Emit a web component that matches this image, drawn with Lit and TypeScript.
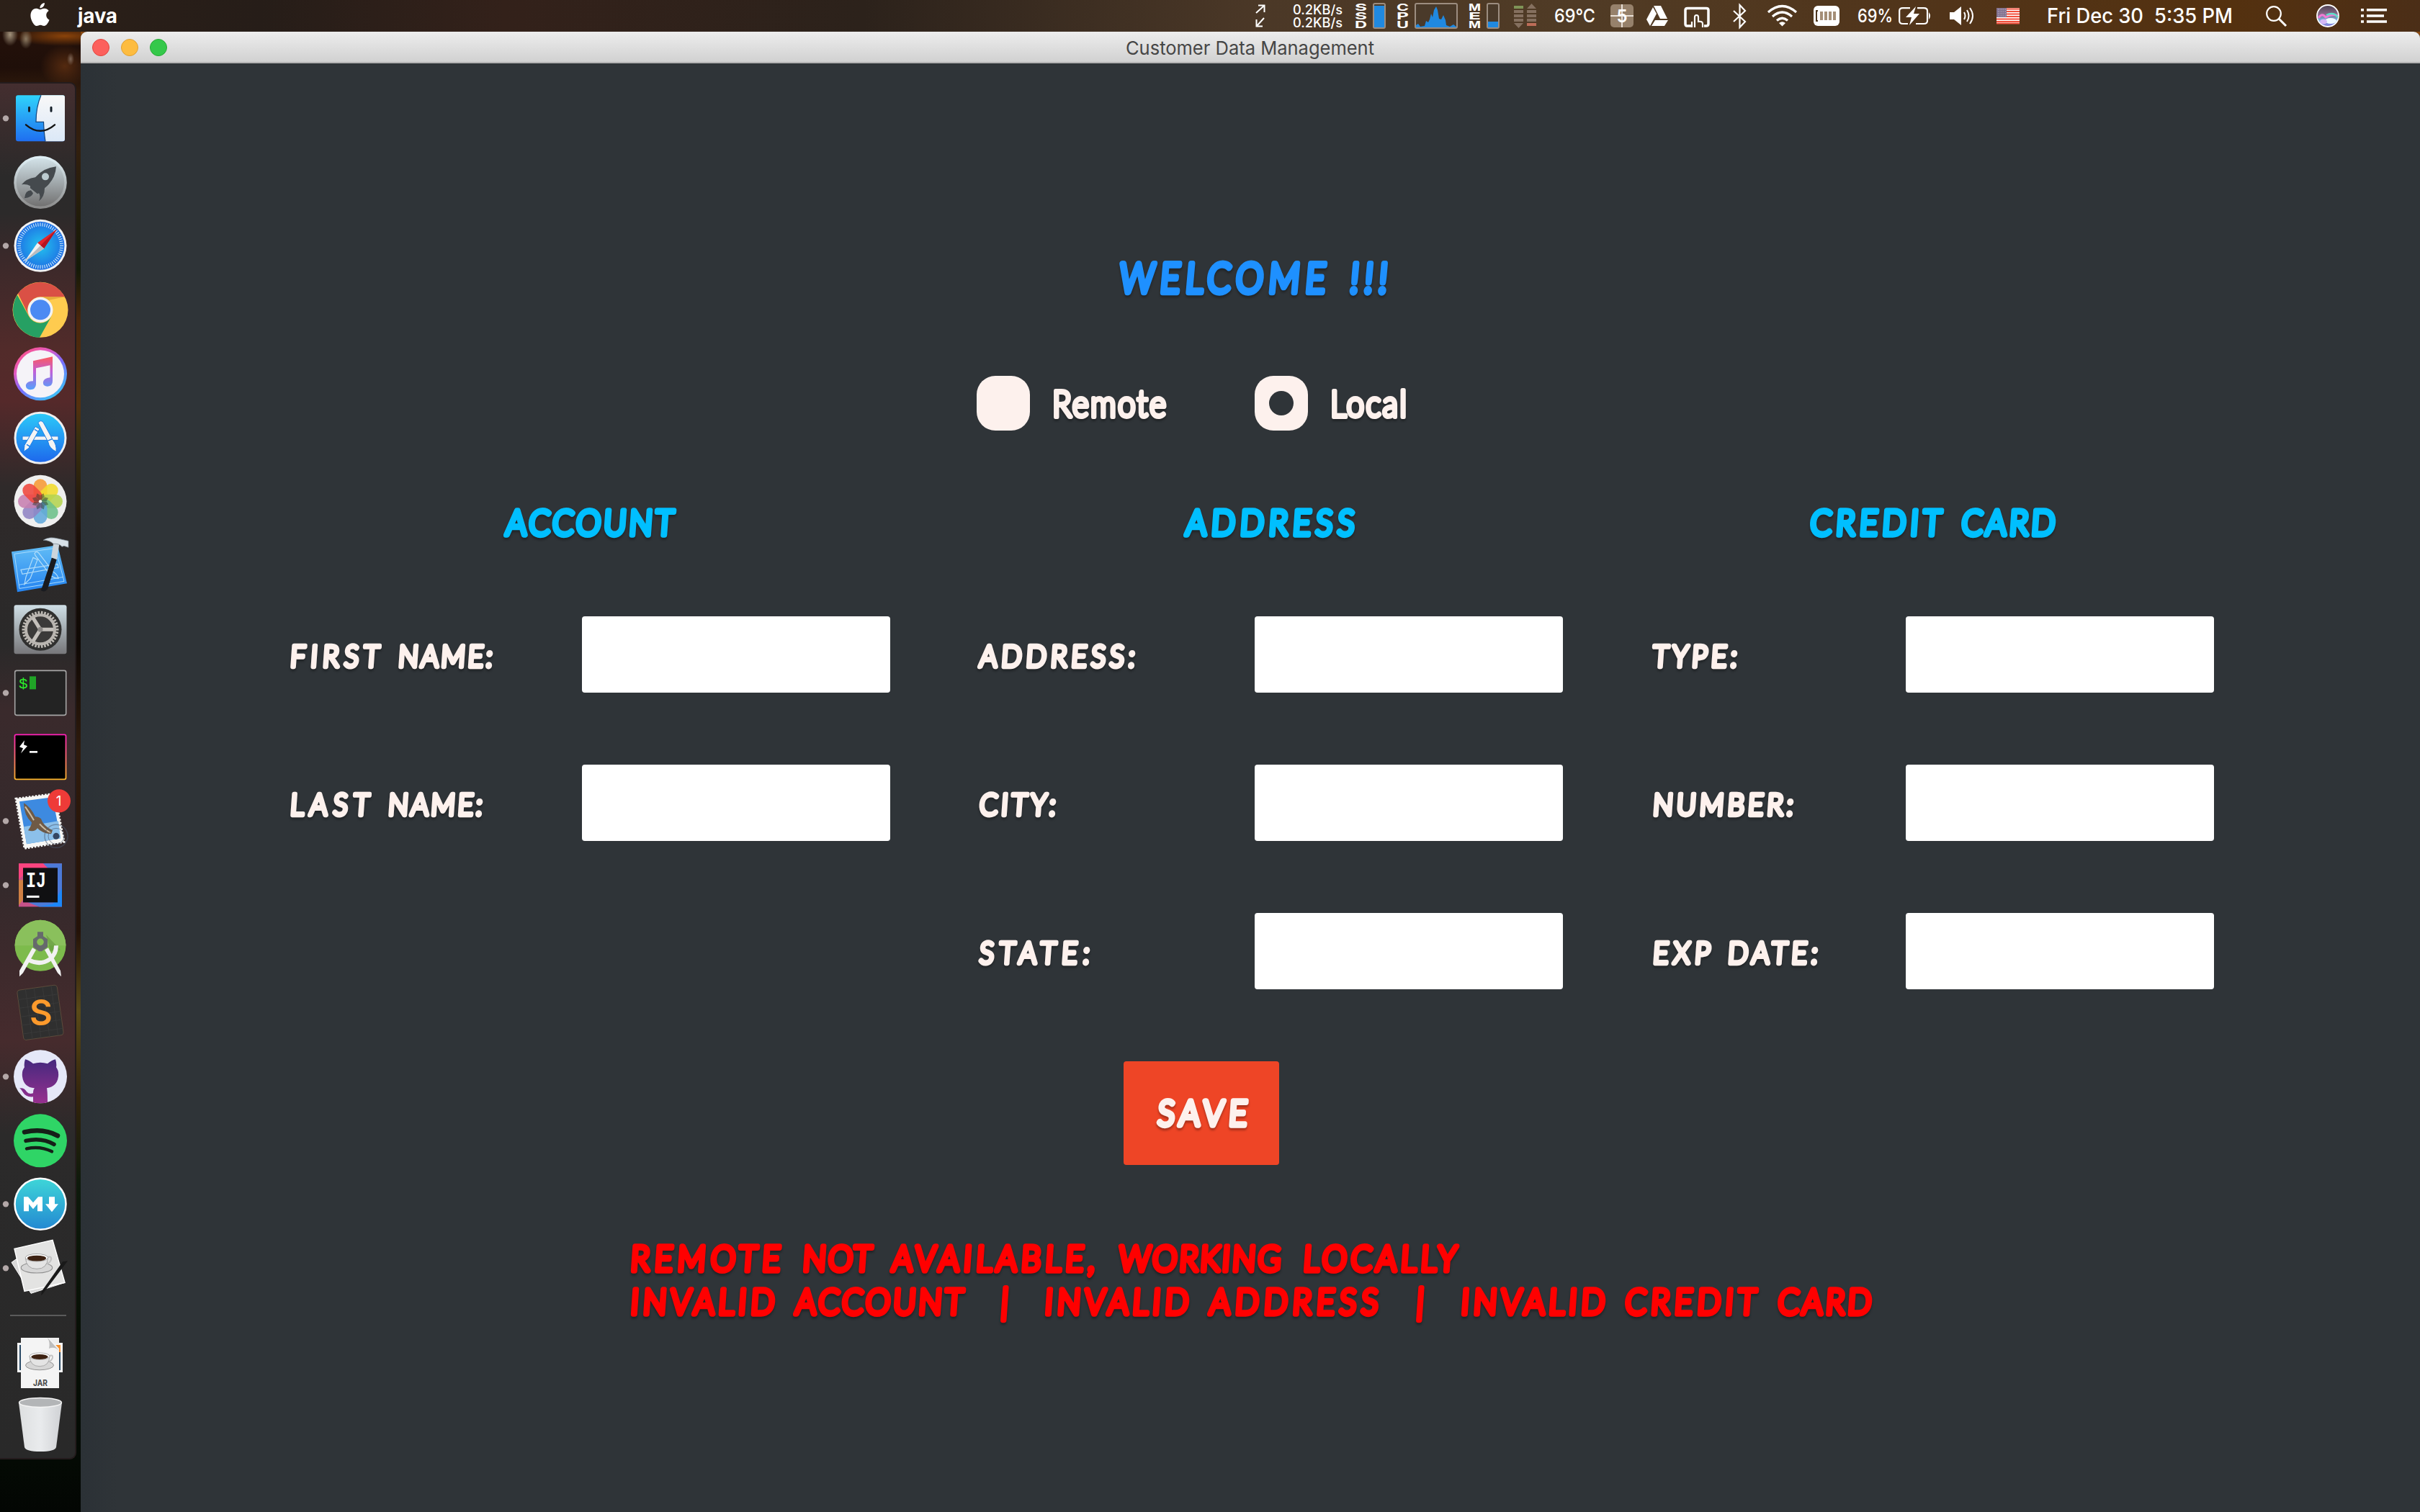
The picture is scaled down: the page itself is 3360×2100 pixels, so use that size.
import { LitElement, html, svg, css } from "lit";
import { customElement, property } from "lit/decorators.js";

type Word = [text: string, x: number, width: number];

/* Marker-style lettering: thin glyphs thickened by a round-joined stroke. */
@customElement("marker-text")
class MarkerText extends LitElement {
  @property({ attribute: false }) words: Word[] = [];
  @property({ type: Number }) cap = 42;
  @property({ type: Number }) width = 100;
  @property({ type: Number }) thickness = 7.5;
  @property({ type: Number }) squeeze = 0.9;
  @property({ type: Number }) slant = 4;

  static styles = css`
    :host { display: block; line-height: 0; }
    svg { display: block; overflow: visible; filter: drop-shadow(0 3px 1.5px rgba(0, 0, 0, 0.3)); }
    text {
      font-family: "Lato", "Open Sans", sans-serif;
      font-weight: 300;
      fill: currentColor;
      stroke: currentColor;
      stroke-linejoin: round;
      stroke-linecap: round;
    }
  `;

  render() {
    const t = this.thickness;
    const size = (this.cap - t) / 0.72;
    return html`<svg width=${this.width} height=${this.cap}>
      ${this.words.map(
        ([text, x, w]) => svg`<text
          transform="translate(${x + t / 2 - 3} ${this.cap - t / 2}) skewX(${-this.slant}) scale(${this.squeeze} 1)"
          font-size=${size} stroke-width=${t}
          textLength=${(w - t + 3) / this.squeeze} lengthAdjust="spacing">${text}</text>`
      )}
    </svg>`;
  }
}

const statusItems = [
  { w: 52, art: svg`<g fill="none" stroke="#fff" stroke-width="2"><path d="M1 18L12 8M4 7.500H12.500V17M12 25L2 36M1.500 27V36.500H10"/></g>` },
  { w: 86, art: svg`<g fill="#fff" font-size="18" font-weight="500"><text x="0" y="20" textLength="69" lengthAdjust="spacingAndGlyphs">0.2KB/s</text><text x="0" y="38" textLength="69" lengthAdjust="spacingAndGlyphs">0.2KB/s</text></g>` },
  { w: 25, art: svg`<g fill="#fff" font-size="13.500" font-weight="700"><text x="0" y="15" textLength="17" lengthAdjust="spacingAndGlyphs">S</text><text x="0" y="27" textLength="17" lengthAdjust="spacingAndGlyphs">S</text><text x="0" y="39" textLength="17" lengthAdjust="spacingAndGlyphs">D</text></g>` },
  { w: 33, art: svg`<rect x="1" y="5" width="16" height="34" rx="2" fill="#4a3a2a" stroke="#9c8d80" stroke-width="2"/><rect x="2" y="8" width="14" height="30" fill="#2089e0"/>` },
  { w: 25, art: svg`<g fill="#fff" font-size="13.500" font-weight="700"><text x="0" y="15" textLength="17" lengthAdjust="spacingAndGlyphs">C</text><text x="0" y="27" textLength="17" lengthAdjust="spacingAndGlyphs">P</text><text x="0" y="39" textLength="17" lengthAdjust="spacingAndGlyphs">U</text></g>` },
  { w: 75, art: svg`<rect x="1" y="5" width="58" height="34" rx="2" fill="#4a3a2a" stroke="#9c8d80" stroke-width="2"/><path d="M2 38V35L5 33L8 37L14 36L16 29L19 31L21 27L23 19L25 24L27 14L30 9L32 14L34 26L37 27L40 21L43 28L44 35L49 37L54 34L58 37V38Z" fill="#2089e0"/>` },
  { w: 25, art: svg`<g fill="#fff" font-size="13.500" font-weight="700"><text x="0" y="15" textLength="17" lengthAdjust="spacingAndGlyphs">M</text><text x="0" y="27" textLength="17" lengthAdjust="spacingAndGlyphs">E</text><text x="0" y="39" textLength="17" lengthAdjust="spacingAndGlyphs">M</text></g>` },
  { w: 38, art: svg`<rect x="1" y="5" width="16" height="34" rx="2" fill="#4a3a2a" stroke="#9c8d80" stroke-width="2"/><rect x="2" y="30" width="14" height="8" fill="#2089e0"/>` },
  { w: 56, art: svg`<g fill="#85705f"><path d="M18 12L24.500 5L31 12ZM0 32H13L6.500 39Z"/><path d="M0 14h13v4H0zM0 20h13v4H0zM0 26h13v4H0zM18 14h13v4H18zM18 20h13v4H18zM18 26h13v4H18z"/></g><path d="M0 8h13v4H0z" fill="#7f9457"/><path d="M18 32h13v4H18z" fill="#bd6d58"/>` },
  { w: 78, art: svg`<text fill="#fff" font-size="26" font-weight="500" x="0" y="31" textLength="57" lengthAdjust="spacingAndGlyphs">69°C</text>` },
  { w: 50, art: svg`<rect x="0" y="6" width="32" height="32" rx="5" fill="#96816b"/><path d="M0 22H32M16 6V38" stroke="#e9e0d6" stroke-width="2"/><text x="16" y="31" text-anchor="middle" font-size="24" font-weight="600" fill="#fff">5</text>` },
  { w: 52, art: svg`<g fill="#fff"><path d="M10 8H20L29 26H19Z"/><path d="M9 10L14 19L5 36L0 27Z"/><path d="M12 28H30L25 36H7Z"/></g>` },
  { w: 68, art: svg`<path d="M12 36H4Q2 36 2 33V14Q2 11.500 5 11.500H31Q34 11.500 34 14V33Q34 36 31 36H28" fill="none" stroke="#fff" stroke-width="3.500"/><path d="M15 38V24Q15 21 17.500 21T20 24V30Q26 29 26 33V38M11 30V38" fill="none" stroke="#fff" stroke-width="2.200"/>` },
  { w: 48, art: svg`<path d="M1 15L17 30L9.500 38V7L17 15L1 30" fill="none" stroke="#fff" stroke-width="2.200"/>` },
  { w: 64, art: svg`<g fill="none" stroke="#fff" stroke-width="3.200"><path d="M1 17Q20.500 0 40 17M7 23Q20.500 11 34 23M13 28.500Q20.500 22 28 28.500"/></g><path d="M16 32Q20.500 28.500 25 32L20.500 36.500Z" fill="#fff"/>` },
  { w: 61, art: svg`<rect x="0" y="8" width="36" height="28" rx="6" fill="#fff"/><path d="M6 15H4V29H6" fill="none" stroke="#4d361f" stroke-width="2"/><path d="M11 16v12M17 16v12M23 16v12M29 16v12" stroke="#a58f78" stroke-width="4"/>` },
  { w: 57, art: svg`<text fill="#fff" font-size="26" font-weight="500" x="0" y="31" textLength="49" lengthAdjust="spacingAndGlyphs">69%</text>` },
  { w: 71, art: svg`<path d="M16 11.200H6Q1.200 11.200 1.200 15V29Q1.200 33 6 33H13M26 11.200H35Q40 11.200 40 15V29Q40 33 35 33H24" fill="none" stroke="#fff" stroke-width="2.200"/><path d="M42 17Q46 22 42 27Z" fill="#fff"/><path d="M24 9L10 24H18L15 35L29 19H21Z" fill="#fff"/>` },
  { w: 65, art: svg`<path d="M0 17H6L16 9V35L6 27H0Z" fill="#fff"/><path d="M20 17Q23 22 20 27M24 14Q29 22 24 30M28 11Q36 22 28 33" fill="none" stroke="#fff" stroke-width="2"/>` },
  { w: 71, art: svg`<rect x="0" y="11" width="32" height="22" fill="#fff"/><path d="M0 12.500H32M0 16H32M0 19.500H32M0 23H32M0 26.500H32M0 30H32M0 32.500H32" stroke="#f2503c" stroke-width="1.800"/><rect x="0" y="11" width="14" height="13" fill="#81718f"/><path d="M2 13H13M2 16H13M2 19H13M2 22H13" stroke="#cfc7d6" stroke-width="1" stroke-dasharray="1 1.500"/>` },
  { w: 149, art: svg`<text fill="#fff" font-size="28" font-weight="500" x="-1" y="32" textLength="134" lengthAdjust="spacingAndGlyphs">Fri Dec 30</text>` },
  { w: 154, art: svg`<text fill="#fff" font-size="28" font-weight="500" x="-1" y="32" textLength="109" lengthAdjust="spacingAndGlyphs">5:35 PM</text>` },
  { w: 70, art: svg`<circle cx="11" cy="19" r="9.800" fill="none" stroke="#fff" stroke-width="2.200"/><path d="M18 26L28 36" stroke="#fff" stroke-width="3"/>` },
  { w: 62, art: svg`<defs><linearGradient id="siri" x1="0" y1="0" x2="0" y2="1"><stop offset="0" stop-color="#4d3f4f"/><stop offset=".45" stop-color="#8a6e8f"/><stop offset=".7" stop-color="#70b4e0"/><stop offset="1" stop-color="#8a72d8"/></linearGradient></defs><circle cx="16" cy="22" r="15" fill="url(#siri)" stroke="#fff" stroke-width="1.800"/><path d="M3 25Q8 17 13 24Q22 18 30 22" stroke="#f07bd6" stroke-width="3" fill="none"/><path d="M14 21Q24 16 30 24" stroke="#5ce0c8" stroke-width="2.500" fill="none"/><ellipse cx="20" cy="29" rx="8" ry="4" fill="#eefaff"/><ellipse cx="10" cy="30" rx="5" ry="3.500" fill="#d5b8f5"/>` },
  { w: 82, art: svg`<path d="M8 13.700H36M8 22H32M8 30H36" stroke="#fff" stroke-width="3.600"/><path d="M0 13.700H4M0 22H4M0 30H4" stroke="#fff" stroke-width="3.600"/>` },
];

const ring = (n: number, r1: number, r2: number) =>
  Array.from({ length: n }, (_, i) => {
    const a = (i * 2 * Math.PI) / n;
    return svg`<path d="M${Math.cos(a) * r1} ${Math.sin(a) * r1}L${Math.cos(a) * r2} ${Math.sin(a) * r2}"/>`;
  });

const petals = ["#f79a35", "#f2dc2c", "#b5d450", "#6cc08a", "#62a9dc", "#9184c4", "#c77fb0", "#f0473c"];

const cup = svg`<ellipse cx="0" cy="13" rx="25" ry="8.500" fill="#d6d6d6" stroke="#8f8f8f" stroke-width="1.200"/><path d="M16 -3Q24 -7 23 0Q21 6 14 7" fill="none" stroke="#c4c4c4" stroke-width="2.500"/><path d="M-18 -3Q-17 15 0 15T18 -3Z" fill="#e4e4e4" stroke="#9a9a9a" stroke-width="1"/><ellipse cx="0" cy="-3" rx="18" ry="6" fill="#fff" stroke="#999" stroke-width="1"/><ellipse cx="0" cy="-2" rx="15" ry="4.500" fill="#3d2212"/>`;

/* Dock art: x is the dock's own axis, y = 0 is the middle of the slot. */
const dockItems = [
  { run: true, art: svg`<defs><linearGradient id="fa" x1="0" y1="0" x2="0" y2="1"><stop offset="0" stop-color="#2fd3fb"/><stop offset="1" stop-color="#1f6ef0"/></linearGradient><linearGradient id="fb" x1="0" y1="0" x2="0" y2="1"><stop offset="0" stop-color="#f8f8f8"/><stop offset="1" stop-color="#dbe8f7"/></linearGradient></defs><rect x="22" y="-32" width="68" height="64" rx="3" fill="url(#fa)"/><path d="M57 -32H87Q90 -32 90 -29V29Q90 32 87 32H63Q61 20 60.500 5H50Q50 -16 57 -32Z" fill="url(#fb)"/><path d="M57 -32Q50 -16 50 5H60.500Q61 20 63 32" fill="none" stroke="#12457e" stroke-width="1.200"/><path d="M40.500 -15V-10M71 -15V-10" stroke="#141e28" stroke-width="3" stroke-linecap="round"/><path d="M36 9Q56 26 76 9" fill="none" stroke="#141414" stroke-width="2.400" stroke-linecap="round"/>` },
  { art: svg`<defs><linearGradient id="la" x1="0" y1="0" x2="0" y2="1"><stop offset="0" stop-color="#d4e4ea"/><stop offset="1" stop-color="#6f6e6e"/></linearGradient><linearGradient id="lb" x1="0" y1="0" x2="0" y2="1"><stop offset="0" stop-color="#e0f0f6"/><stop offset="1" stop-color="#8b8b8b"/></linearGradient></defs><circle cx="56" cy="0" r="35" fill="url(#la)" stroke="url(#lb)" stroke-width="3.500"/><path d="M78 -22Q60 -20 49 -7Q36 -5 30 3Q37 2 42 5L42 8L52 16L54 15Q57 19 54 26Q62 20 62 8Q77 -4 78 -22ZM43 11Q35 11 34 22Q44 21 46 15Z" fill="#454a4e"/><circle cx="63" cy="-8" r="5" fill="#bccbd0"/>` },
  { run: true, art: svg`<defs><radialGradient id="sa"><stop offset="0" stop-color="#23c4ee"/><stop offset="1" stop-color="#1e6fe4"/></radialGradient></defs><circle cx="56" cy="0" r="36.500" fill="#f2f2f2"/><circle cx="56" cy="0" r="33.500" fill="url(#sa)"/><g transform="translate(56 0)" stroke="#cfe8fb" stroke-width="1.100">${ring(60, 27, 32)}</g><path d="M79 -23L61 4L52 -4Z" fill="#e3252c"/><path d="M79 -23L61 4L56 0Z" fill="#b51520"/><path d="M34 22L61 4L52 -4Z" fill="#f1f1f1"/><path d="M34 22L61 4L56 0Z" fill="#b8bcc0"/>` },
  { art: svg`<circle cx="56" cy="0" r="38.500" fill="#fecb4f"/><path d="M25 -22.500A38.500 38.500 0 0 1 90 -18H56A18 18 0 0 0 40 8Z" fill="#da5045"/><path d="M24 -20.500A38.500 38.500 0 0 0 55 38.500L71.500 9A18 18 0 0 1 40 9Z" fill="#26a063"/><path d="M60 -18H90L66 -13Z" fill="#d5972f" opacity=".6"/><circle cx="56" cy="0" r="17.500" fill="#f3f3f3"/><circle cx="56" cy="0" r="14" fill="#4b8af3"/>` },
  { art: svg`<defs><linearGradient id="ia" x1=".1" y1="0" x2=".8" y2="1"><stop offset="0" stop-color="#ff4f78"/><stop offset=".3" stop-color="#e25bc4"/><stop offset=".55" stop-color="#7c6bff"/><stop offset="1" stop-color="#34cdf6"/></linearGradient><linearGradient id="ib" x1="0" y1="0" x2="0" y2="1"><stop offset="0" stop-color="#fd5a5e"/><stop offset=".45" stop-color="#c05fd8"/><stop offset="1" stop-color="#52a0fc"/></linearGradient></defs><circle cx="56" cy="0" r="37" fill="url(#ia)"/><circle cx="56" cy="0" r="33" fill="#f5f3f8"/><path d="M46 -18L73 -24V10Q73 17 66 17.500Q59 17 60 11Q61 6 69.500 5V-12L50 -8V15Q49 22 42 22Q35 21 36 15Q38 10 46 10Z" fill="url(#ib)"/>` },
  { art: svg`<defs><linearGradient id="aa" x1="0" y1="0" x2="0" y2="1"><stop offset="0" stop-color="#2ccbf9"/><stop offset="1" stop-color="#1d66ec"/></linearGradient></defs><circle cx="56" cy="0" r="35" fill="url(#aa)" stroke="#efefef" stroke-width="3"/><g fill="#f4f4f4" stroke="#1d7fe6" stroke-width="1"><path d="M31 -2.500H81V3H31Z"/><path d="M49 -16L55 -12.500L40 14L33 19L34 10Z"/><path d="M53 -21Q56 -26 60 -22L73 2Q79 9 78 19Q68 14 67 6Z"/></g><path d="M37 9L42 12M66 4L73 1M48 -12L53 -9" stroke="#1d7fe6" stroke-width="1.500"/>` },
  { art: svg`<circle cx="56" cy="0" r="36.500" fill="#efefef"/><g transform="translate(56 0)">${petals.map((c, i) => svg`<rect x="-9.500" y="-31" width="19" height="31" rx="9.500" fill=${c} opacity=".88" transform="rotate(${i * 45})"/>`)}<g>${petals.map((c, i) => svg`<path d="M0 0L-3 -8L0 -12L3 -8Z" fill="#2e3a30" opacity=".5" transform="rotate(${i * 45 + 22})"/>`)}</g><circle r="2.200" fill="#fff"/></g>` },
  { art: svg`<defs><linearGradient id="xa" x1="0" y1="0" x2="0" y2="1"><stop offset="0" stop-color="#62bdf6"/><stop offset="1" stop-color="#2483f0"/></linearGradient></defs><g transform="translate(0 -1)"><path d="M16 -18L80 -27L93 26L24 38Z" fill="url(#xa)"/><path d="M20 -15L77 -23L89 23L27 33ZM26 28L88 17" fill="none" stroke="#a7d9fb" stroke-width="1"/><path d="M48 -16Q51 -20 54 -16L74 10Q80 14 81 19Q72 18 69 13L49 -13ZM46 -10L52 -7L42 19L34 27L36 17ZM29 7L80 -1L81 4L31 13Z" fill="none" stroke="#b3defa" stroke-width="1.200"/><path d="M72 -10L79 -8L66 34Q62 39 57 36Q57 34 59 30Z" fill="#191b20"/><path d="M75 -35L83 -33L79 -7L71 -10Z" fill="#ccd5dc"/><path d="M60 -34Q68 -40 82 -36L95 -33V-24L89 -26L86 -25Q82 -30 74 -29Q69 -34 60 -34Z" fill="#d8e1e8" stroke="#76828c" stroke-width=".7"/></g>` },
  { art: svg`<defs><linearGradient id="pa" x1="0" y1="0" x2="0" y2="1"><stop offset="0" stop-color="#cfdfe6"/><stop offset="1" stop-color="#77777a"/></linearGradient></defs><rect x="19.500" y="-34" width="73" height="68" rx="3" fill="url(#pa)"/><circle cx="56" cy="0" r="29.500" fill="#30302f"/><g transform="translate(56 0)"><g stroke="#bdb9b3" stroke-width="2.600">${ring(34, 20, 25.500)}</g><circle r="20" fill="#3b3a39" stroke="#b9b5b0" stroke-width="4"/><path d="M0 0H18M0 0L-10 -16M0 0L-10 16" stroke="#c4c0bb" stroke-width="5"/><circle r="3.500" fill="#8b8885"/></g>` },
  { run: true, art: svg`<rect x="20.700" y="-31" width="71" height="62" rx="2.500" fill="#232323" stroke="#a5a5a5" stroke-width="1.600"/><text class="mono" x="26" y="-6.500" font-size="21" fill="#2bf02b">$</text><rect x="41" y="-23" width="9" height="18" fill="#20a427"/>` },
  { art: svg`<defs><linearGradient id="ha" x1="0" y1="0" x2="0" y2="1"><stop offset="0" stop-color="#ff1fb8"/><stop offset="1" stop-color="#fdb62b"/></linearGradient></defs><rect x="20.500" y="-31" width="71" height="62" rx="2" fill="#000" stroke="url(#ha)" stroke-width="1.800"/><path d="M34 -23L27 -14L32 -12L29 -5L38 -15L33 -17Z" fill="#fff"/><path d="M41 -7H52" stroke="#fff" stroke-width="2.600"/>` },
  { run: true, art: svg`<path d="M22 -31L76 -38L89 29L34 38Z" fill="#f7f7f5" stroke="#f7f7f5" stroke-width="3" stroke-dasharray="2.500 2"/><path d="M27 -27L73 -33L84 24L37 32Z" fill="#3d8ae0"/><path d="M33 8L81 0L84 24L37 32Z" fill="#8cc0ea"/><path d="M33 -25Q42 -20 49 -6Q54 -6 57 -3Q60 7 73 13L71 18Q58 17 52 10Q48 16 39 13Q44 6 44 2Q33 -8 33 -25Z" fill="#6f5a46"/><path d="M35 -20Q42 -10 47 -1M55 4Q62 12 70 16" stroke="#cdbda3" stroke-width="2" fill="none"/><circle cx="78" cy="21" r="16" fill="none" stroke="#4c5a70" stroke-width="1.500" opacity=".5"/><circle cx="78" cy="21" r="11" fill="none" stroke="#4c5a70" stroke-width="1" opacity=".6"/><circle cx="78" cy="21" r="4.500" fill="#344663"/><circle cx="82" cy="-28" r="16" fill="#ee3b38"/><text x="81.500" y="-21.500" text-anchor="middle" font-size="19" fill="#fff">1</text>` },
  { run: true, art: svg`<rect x="26" y="-30" width="60" height="60" fill="#c65289"/><path d="M60 -30H86V30H54L34 22Z" fill="#4c7ad8"/><path d="M60 -30L80 -10L45 -24L26 -8V-30Z" fill="#fb447f"/><path d="M26 -7H34V18L26 28Z" fill="#cf8044"/><path d="M54 30H86V4L74 26Z" fill="#1c87fa"/><rect x="32" y="-24" width="48" height="48" fill="#101012"/><text class="mono" x="36" y="3" font-size="30" font-weight="700" textLength="28" lengthAdjust="spacingAndGlyphs" fill="#fff">IJ</text><path d="M37 16H54.500" stroke="#fff" stroke-width="3"/>` },
  { art: svg`<circle cx="56" cy="-4" r="35.500" fill="#7dbb4c"/><path d="M20.500 -4A35.500 35.500 0 0 1 91.500 -4Z" fill="#8ac05c"/><path d="M64 -19L84 2L70 4Z" fill="#578a36" opacity=".45"/><path d="M50 2L32 34L27 39L27 31L45 -1ZM62 2L80 34L85 39L84 31L67 -1Z" fill="#f1f1f1"/><path d="M40 16Q56 24 69 15Q78 8 78 -4" stroke="#f1f1f1" stroke-width="6" fill="none"/><path d="M52 -23H60V-17L66 -13V-2L58 4H54L46 -2V-13L52 -17Z" fill="#666a6c"/><circle cx="56" cy="-9" r="4.800" fill="#86c052"/>` },
  { art: svg`<g transform="rotate(-8 56 0)"><rect x="28" y="-35" width="56" height="70" rx="4" fill="#2f2f2f" stroke="#5c4b3b" stroke-width="1"/><path d="M28 -22H84M28 -10H84M28 2H84M28 14H84M28 26H84M40 -35V35M52 -35V35M64 -35V35M76 -35V35" stroke="#393939" stroke-width="1"/></g><text x="57" y="18" text-anchor="middle" font-size="49" font-weight="600" fill="#fd9a2c">S</text>` },
  { run: true, art: svg`<defs><linearGradient id="ga" x1="0" y1="0" x2="0" y2="1"><stop offset="0" stop-color="#45297e"/><stop offset="1" stop-color="#97308f"/></linearGradient><clipPath id="gc"><circle cx="56" cy="0" r="37"/></clipPath></defs><circle cx="56" cy="0" r="37" fill="#e5e8f8"/><path clip-path="url(#gc)" d="M35 -24Q40 -23 46 -18Q56 -21 66 -18Q72 -23 77 -24Q79 -18 78 -13Q82 -8 81 0Q79 14 65 16Q66 20 66 37H46V28Q36 29 32 22Q29 17 27 16Q34 15 37 21Q40 25 46 23Q46 18 48 16Q33 15 31 0Q30 -8 34 -13Q33 -18 35 -24Z" fill="url(#ga)"/>` },
  { art: svg`<circle cx="56" cy="0" r="37" fill="#2fd566"/><g fill="none" stroke="#152018" stroke-linecap="round"><path d="M34 -12Q60 -18 80 -7" stroke-width="6.500"/><path d="M36 0Q58 -5 75 5" stroke-width="5.500"/><path d="M37 11Q56 7 72 15" stroke-width="4.500"/></g>` },
  { run: true, art: svg`<defs><linearGradient id="ma" x1="0" y1="0" x2="0" y2="1"><stop offset="0" stop-color="#3ed6d8"/><stop offset="1" stop-color="#2388d2"/></linearGradient></defs><circle cx="56" cy="0" r="35.500" fill="url(#ma)" stroke="#fff" stroke-width="2.500"/><path d="M33 10V-10H39L46 -2L53 -10H59V10H52V0L46 7L40 0V10ZM68 -10H76V0H81L72 11L63 0H68Z" fill="#fff"/>` },
  { run: true, art: svg`<path d="M16 -8L36 -22L90 20L43 35Z" fill="#d8d8d8" stroke="#fff" stroke-width="1"/><path d="M20 -27L73 -39L90 20L34 32Z" fill="#e3e3e2" stroke="#fff" stroke-width="1.500"/><g transform="translate(51 -12) scale(.87)">${cup}</g><path d="M94 -10L60 35L57 38L58 32L87 -9Z" fill="#191919"/>` },
];

const fileStack = svg`<rect x="24" y="-28" width="63" height="41" fill="#f6f6f6"/><rect x="27" y="-25" width="57" height="35" fill="#2a4a66"/><rect x="72" y="-25" width="12" height="10" fill="#f4902c"/><rect x="32" y="-35" width="50" height="8" fill="#eee"/><path d="M29 -35H68L82 -20V35H29Z" fill="#f4f4f4"/><path d="M66 -35Q70 -28 68 -20Q76 -24 83 -16Z" fill="#bdbdbd"/><g transform="translate(55 -7) scale(.78)">${cup}</g><text x="46" y="32" font-size="12" font-weight="700" fill="#4a4a4a" textLength="20" lengthAdjust="spacingAndGlyphs">JAR</text>`;

const trash = svg`<defs><linearGradient id="ta" x1="0" x2="1"><stop offset="0" stop-color="#dddfe0"/><stop offset=".5" stop-color="#e9ebed"/><stop offset="1" stop-color="#cfd1d4"/></linearGradient></defs><path d="M26 -31L34 31Q36 37 56 37T78 31L86 -31Z" fill="url(#ta)"/><ellipse cx="56" cy="-31" rx="29.500" ry="6.500" fill="#b3b5b7" stroke="#f4f4f4" stroke-width="1.500"/>`;

interface Group {
  cls: string;
  head: Word[];
  headWidth: number;
  rows: { words: Word[]; width: number }[];
}

const groups: Group[] = [
  {
    cls: "account",
    head: [["ACCOUNT", 0, 237]],
    headWidth: 237,
    rows: [
      { words: [["FIRST", 0, 127], ["NAME:", 150, 134]], width: 284 },
      { words: [["LAST", 0, 113], ["NAME:", 136, 134]], width: 270 },
    ],
  },
  {
    cls: "address",
    head: [["ADDRESS", 0, 238]],
    headWidth: 238,
    rows: [
      { words: [["ADDRESS:", 1, 219]], width: 219 },
      { words: [["CITY:", 1, 109]], width: 109 },
      { words: [["STATE:", 1, 156]], width: 156 },
    ],
  },
  {
    cls: "card",
    head: [["CREDIT", 0, 186], ["CARD", 210, 134]],
    headWidth: 344,
    rows: [
      { words: [["TYPE:", 0, 120]], width: 120 },
      { words: [["NUMBER:", 0, 198]], width: 198 },
      { words: [["EXP", 0, 83], ["DATE:", 104, 128]], width: 232 },
    ],
  },
];

const errors: Word[][] = [
  [["REMOTE", 0, 212], ["NOT", 239, 100], ["AVAILABLE,", 363, 286], ["WORKING", 678, 229], ["LOCALLY", 934, 217]],
  [["INVALID", 0, 204], ["ACCOUNT", 229, 237], ["|", 514, 12], ["INVALID", 575, 204], ["ADDRESS", 804, 238], ["|", 1091, 12], ["INVALID", 1153, 204], ["CREDIT", 1381, 186], ["CARD", 1593, 134]],
];

@customElement("app-root")
class AppRoot extends LitElement {
  static styles = css`
    :host { display: block; width: 3360px; height: 2100px; overflow: hidden; font-family: "Inter", "Liberation Sans", sans-serif; }
    * { box-sizing: border-box; }
    svg { display: block; flex: none; overflow: visible; }
    .mono { font-family: "Liberation Mono", monospace; }
    .desktop { display: grid; grid-template: 44px 2056px / 112px 3248px; width: 3360px; height: 2100px; background: #8a4a12; }
    .menubar { grid-column: 1 / 3; display: flex; justify-content: space-between; background: linear-gradient(90deg, #2c2018 0, #261d18 360px, #33211a 700px, #2c221b 1200px, #4b3827 1750px, #503b25 2200px, #513419 2700px, #54310f 3100px, #4b2e17 100%); }
    .side { display: flex; }
    .wall { padding-top: 70px; background:
      radial-gradient(ellipse 11px 16px at 14px 4px, #a3937c, transparent),
      radial-gradient(ellipse 9px 14px at 36px 10px, #8a7962, transparent),
      radial-gradient(ellipse 5px 9px at 98px 38px, #7d6555, transparent),
      radial-gradient(ellipse 75px 14px at 90px 6px, #8a430a, transparent),
      radial-gradient(ellipse 34px 30px at 90px 48px, #542a10, transparent),
      linear-gradient(#24110a 0, #1f0f09 50px, #2e1a0c 80px, #33200f 160px, #141a08 330px, #4a260c 400px, #54300f 520px, #3a3010 560px, #1c110a 700px, #0f0905 850px, #2f1b0d 1000px, #241208 1250px, #5a4a18 1360px, #33240c 1480px, #0e1a0c 1600px, #081006 1800px, #040a04 1985px, #030603 100%); }
    .dock { width: 106px; height: 1913px; padding-top: 4px; border: 2px solid #241c1d; border-left: 0; border-radius: 0 9px 9px 0;
      background: linear-gradient(#442e2f 0, #2b2a2a 130px, #2c2a2a 180px, #3a292a 240px, #522b2a 370px, #55292a 440px, #2f2a2a 560px, #2a2929 780px, #3a2a2c 870px, #33292b 1100px, #462b2d 1330px, #2b2a2a 1460px, #292929 100%); }
    .slot { display: block; width: 106px; height: 88.72px; }
    .rule { height: 2px; width: 78px; margin: 20px 0 0 14px; background: #5b5b5b; }
    .slot.file { margin-top: 20px; height: 90px; }
    .slot.bin { height: 86px; margin-top: -2px; }
    .window { display: flex; flex-direction: column; background: linear-gradient(90deg, #2b3136, #2f3438 50px); border-radius: 9px 9px 0 0; overflow: hidden; }
    .titlebar { flex: none; display: grid; grid-template-columns: 200px 1fr 200px; align-items: center; height: 44px; padding: 0; background: linear-gradient(#ededed, #d1d1d1); border-bottom: 2px solid #b4b4b4; }
    .lights { display: flex; gap: 16px; padding: 1px 0 0 16px; }
    .light { width: 24px; height: 24px; border-radius: 50%; border: 1px solid #e2463f; background: #fc605c; }
    .light.min { background: #fdbc40; border-color: #dea034; }
    .light.max { background: #34c84a; border-color: #27aa35; }
    .caption { justify-self: center; fill: #464646; font-size: 26px; }
    .content { display: flex; flex-direction: column; padding: 273px 0 0; color: #fdf1ed; }
    .welcome { margin-left: 1440px; color: #1e90ff; }
    .modes { display: flex; margin: 112px 0 0 1244px; }
    .mode { display: flex; width: 386px; gap: 31px; }
    .box { display: flex; align-items: center; justify-content: center; width: 74px; height: 76px; border-radius: 26px; background: #fdf1ed; }
    .dot { width: 34px; height: 34px; border-radius: 50%; background: #2f3438; }
    .mode marker-text { margin-top: 17px; }
    .groups { display: grid; grid-template-columns: 834px 814px 780px; column-gap: 122px; margin: 107px 0 0 290px; }
    .group { display: grid; grid-template-rows: 51px repeat(3, 106px); row-gap: 100px; }
    .account { grid-template-columns: 406px 428px; }
    .address { grid-template-columns: 384px 428px; }
    .card { grid-template-columns: 352px 428px; }
    .head { grid-column: 1 / 3; justify-self: center; color: #00bfff; }
    .label { align-self: center; margin-top: 3px; }
    .field { width: 428px; height: 106px; border: 0; border-radius: 4px; background: #fff; outline: 0; }
    .save { display: flex; align-items: center; justify-content: center; width: 216px; height: 144px; margin: 100px 0 0 1448px; border: 0; border-radius: 4px; background: #ee4526; color: #fdf1ed; padding: 0; }
    .errors { display: flex; flex-direction: column; gap: 18px; margin: 109px 0 0 762px; color: #ff0000; }
  `;

  render() {
    return html`<div class="desktop">
      <header class="menubar">
        <div class="side">
          <svg width="108" height="44"><path transform="translate(39.500 4) scale(1.333)" fill="#fff" d="M12.152 6.896c-.948 0-2.415-1.078-3.960-1.040-2.040.027-3.910 1.183-4.961 3.014-2.117 3.675-.546 9.103 1.519 12.090 1.013 1.454 2.208 3.090 3.792 3.039 1.520-.065 2.090-.987 3.935-.987 1.831 0 2.350.987 3.960.948 1.637-.026 2.676-1.480 3.676-2.948 1.156-1.688 1.636-3.325 1.662-3.415-.039-.013-3.182-1.221-3.220-4.857-.026-3.040 2.480-4.494 2.597-4.559-1.429-2.090-3.623-2.324-4.390-2.376-2-.156-3.675 1.090-4.610 1.090zM15.530 3.830c.843-1.012 1.400-2.427 1.245-3.830-1.207.052-2.662.805-3.532 1.818-.780.896-1.454 2.338-1.273 3.714 1.338.104 2.715-.688 3.559-1.701"/></svg>
          <svg width="60" height="44"><text x="0" y="31.500" font-size="28" font-weight="700" fill="#fff" textLength="55" lengthAdjust="spacingAndGlyphs">java</text></svg>
        </div>
        <div class="side">${statusItems.map((i) => html`<svg width=${i.w} height="44">${i.art}</svg>`)}</div>
      </header>
      <aside class="wall">
        <nav class="dock">
          ${dockItems.map(
            (i) => html`<svg class="slot" viewBox="0 -44.335 106 88.67">
              ${i.run ? svg`<circle cx="8" cy="0" r="4.200" fill="#b3a8a8"/>` : ""}${i.art}
            </svg>`
          )}
          <div class="rule"></div>
          <svg class="slot file" viewBox="0 -45 106 90">${fileStack}</svg>
          <svg class="slot bin" viewBox="0 -43 106 86">${trash}</svg>
        </nav>
      </aside>
      <main class="window">
        <div class="titlebar">
          <div class="lights"><span class="light"></span><span class="light min"></span><span class="light max"></span></div>
          <svg class="caption" width="346" height="40"><text x="0" y="31" font-size="26" textLength="345" lengthAdjust="spacingAndGlyphs">Customer Data Management</text></svg>
        </div>
        <div class="content">
          <marker-text class="welcome" .words=${[["WELCOME", 0, 291], ["!!!", 320, 57]]} .cap=${49} .width=${376} .thickness=${8.5} .squeeze=${0.84} .slant=${5}></marker-text>
          <div class="modes">
            <div class="mode"><span class="box"></span><marker-text .words=${[["Remote", 0, 161]]} .cap=${43} .width=${161} .thickness=${6} .squeeze=${0.86} .slant=${0}></marker-text></div>
            <div class="mode"><span class="box"><span class="dot"></span></span><marker-text .words=${[["Local", 0, 109]]} .cap=${43} .width=${109} .thickness=${6} .squeeze=${0.86} .slant=${0}></marker-text></div>
          </div>
          <div class="groups">
            ${groups.map(
              (g) => html`<section class="group ${g.cls}">
                <marker-text class="head" .words=${g.head} .cap=${42} .width=${g.headWidth}></marker-text>
                ${g.rows.map(
                  (r) => html`<marker-text class="label" .words=${r.words} .cap=${36} .width=${r.width} .thickness=${6.3}></marker-text><input class="field" />`
                )}
              </section>`
            )}
          </div>
          <button class="save"><marker-text .words=${[["SAVE", 0, 128]]} .cap=${42} .width=${124}></marker-text></button>
          <div class="errors">${errors.map((e) => html`<marker-text .words=${e} .cap=${42} .width=${1728}></marker-text>`)}</div>
        </div>
      </main>
    </div>`;
  }
}
